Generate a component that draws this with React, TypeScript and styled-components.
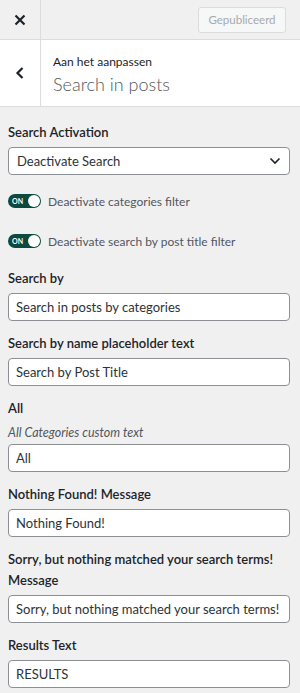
import React from 'react';
import styled, { createGlobalStyle } from 'styled-components';

const GlobalStyle = createGlobalStyle`
  html, body {
    margin: 0;
    padding: 0;
    background: #f0f0f1;
  }
  body {
    font-family: Lato, "Noto Sans", sans-serif;
    color: #1d2327;
  }
  * {
    box-sizing: border-box;
  }
`;

interface TextControl {
  label: string;
  description?: string;
  value: string;
}

const textControls: TextControl[] = [
  { label: 'Search by', value: 'Search in posts by categories' },
  { label: 'Search by name placeholder text', value: 'Search by Post Title' },
  { label: 'All', description: 'All Categories custom text', value: 'All' },
  { label: 'Nothing Found! Message', value: 'Nothing Found!' },
  {
    label: 'Sorry, but nothing matched your search terms! Message',
    value: 'Sorry, but nothing matched your search terms!',
  },
  { label: 'Results Text', value: 'RESULTS' },
];

const toggles = ['Deactivate categories filter', 'Deactivate search by post title filter'];

export default function App() {
  return (
    <Panel>
      <GlobalStyle />
      <TopBar>
        <CloseButton aria-label="Sluiten">
          <svg width="12" height="12" viewBox="0 0 12 12">
            <path d="M1.5 1.5 L10.5 10.5 M10.5 1.5 L1.5 10.5" stroke="#1d2327" strokeWidth="2.2" />
          </svg>
        </CloseButton>
        <PublishButton disabled>Gepubliceerd</PublishButton>
      </TopBar>

      <SectionHeader>
        <BackButton aria-label="Terug">
          <svg width="10" height="14" viewBox="0 0 10 14">
            <path d="M7.5 2 L2.5 7 L7.5 12" stroke="#1d2327" strokeWidth="2.2" fill="none" />
          </svg>
        </BackButton>
        <TitleBlock>
          <Overline>Aan het aanpassen</Overline>
          <SectionTitle>Search in posts</SectionTitle>
        </TitleBlock>
      </SectionHeader>

      <Content>
        <Control>
          <Label>Search Activation</Label>
          <SelectBox>
            <span>Deactivate Search</span>
            <svg width="12" height="8" viewBox="0 0 12 8">
              <path d="M1.5 1.5 L6 6 L10.5 1.5" stroke="#1d2327" strokeWidth="1.6" fill="none" />
            </svg>
          </SelectBox>
        </Control>

        <ToggleList>
          {toggles.map((text) => (
            <ToggleRow key={text}>
              <Switch>
                <SwitchText>ON</SwitchText>
                <Knob />
              </Switch>
              <ToggleLabel>{text}</ToggleLabel>
            </ToggleRow>
          ))}
        </ToggleList>

        {textControls.map((control) => (
          <Control key={control.label}>
            <Label>{control.label}</Label>
            {control.description && <Description>{control.description}</Description>}
            <TextInput value={control.value} readOnly />
          </Control>
        ))}
      </Content>
    </Panel>
  );
}

const Panel = styled.div`
  width: 300px;
  min-height: 693px;
  background: #f0f0f1;
  overflow: hidden;
`;

const TopBar = styled.div`
  display: flex;
  align-items: center;
  justify-content: space-between;
  height: 40px;
  background: #f0f0f1;
  border-bottom: 1px solid #dcdcde;
  padding-right: 14px;
`;

const CloseButton = styled.button`
  display: flex;
  align-items: center;
  justify-content: center;
  width: 41px;
  height: 100%;
  padding: 0;
  background: transparent;
  border: 0;
  border-right: 1px solid #dcdcde;
`;

const PublishButton = styled.button`
  height: 26px;
  width: 88px;
  padding: 0;
  font-family: inherit;
  font-size: 11.5px;
  color: #a7aaad;
  background: #f6f7f7;
  border: 1px solid #dcdcde;
  border-radius: 3px;
`;

const SectionHeader = styled.div`
  display: flex;
  height: 67px;
  background: #ffffff;
  border-bottom: 1px solid #dcdcde;
`;

const BackButton = styled.button`
  display: flex;
  align-items: center;
  justify-content: center;
  width: 41px;
  height: 100%;
  padding: 0;
  background: transparent;
  border: 0;
  border-right: 1px solid #dcdcde;
`;

const TitleBlock = styled.div`
  display: flex;
  flex-direction: column;
  justify-content: center;
  padding: 3px 12px 0;
`;

const Overline = styled.span`
  font-size: 12px;
  line-height: 18px;
  color: #1d2327;
`;

const SectionTitle = styled.h3`
  margin: 1px 0 0;
  font-size: 18px;
  line-height: 24px;
  font-weight: 300;
  color: #50575e;
`;

const Content = styled.div`
  padding: 15px 10px 0 8px;
`;

const Control = styled.div`
  margin-bottom: 12px;
`;

const Label = styled.label`
  display: block;
  margin-bottom: 4px;
  font-size: 13px;
  line-height: 21px;
  font-weight: 600;
  color: #1d2327;
`;

const Description = styled.span`
  display: block;
  margin: -1px 0 1px;
  font-size: 12.5px;
  line-height: 21px;
  font-style: italic;
  color: #50575e;
`;

const SelectBox = styled.div`
  display: flex;
  align-items: center;
  justify-content: space-between;
  height: 28px;
  padding: 0 8px;
  font-size: 13px;
  color: #2c3338;
  background: #ffffff;
  border: 1px solid #8c8f94;
  border-radius: 4px;
`;

const TextInput = styled.input`
  display: block;
  width: 100%;
  height: 28px;
  margin: 0;
  padding: 0 7px;
  font-family: inherit;
  font-size: 13px;
  color: #2c3338;
  background: #ffffff;
  border: 1px solid #8c8f94;
  border-radius: 4px;
  outline: none;
`;

const ToggleList = styled.div`
  display: flex;
  flex-direction: column;
  gap: 14px;
  margin: 13px 0 14px;
`;

const ToggleRow = styled.div`
  display: flex;
  align-items: center;
  gap: 7px;
  height: 26px;
`;

const Switch = styled.span`
  position: relative;
  display: inline-flex;
  align-items: center;
  width: 33px;
  height: 14px;
  padding-left: 4px;
  background: #0b4a3f;
  border-radius: 7px;
`;

const SwitchText = styled.span`
  font-size: 7px;
  font-weight: 700;
  color: #ffffff;
`;

const Knob = styled.span`
  position: absolute;
  right: 1px;
  top: 1px;
  width: 12px;
  height: 12px;
  background: #ffffff;
  border-radius: 50%;
`;

const ToggleLabel = styled.span`
  font-size: 12px;
  color: #50575e;
`;
